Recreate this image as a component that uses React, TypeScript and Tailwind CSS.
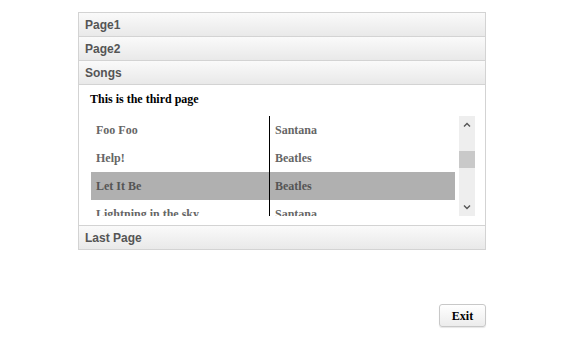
const songs = [
  { title: "Foo Foo", artist: "Santana" },
  { title: "Help!", artist: "Beatles" },
  { title: "Let It Be", artist: "Beatles", selected: true },
  { title: "Lightning in the sky", artist: "Santana" },
];

const Header = ({ label, last }: { label: string; last?: boolean }) => (
  <div
    className={`flex items-center px-[6px] bg-gradient-to-b from-[#fafafa] to-[#e9e9e9] text-[12px] font-bold text-[#555] ${
      last ? "h-[23px]" : "h-[24px] border-b border-[#d3d3d3]"
    }`}
    style={{ fontFamily: '"Liberation Sans", Arial, sans-serif' }}
  >
    {label}
  </div>
);

const Chevron = ({ up }: { up?: boolean }) => (
  <svg width="8" height="5" viewBox="0 0 8 5" className="block">
    <path
      d={up ? "M1 4.5 L4 1.5 L7 4.5" : "M1 0.5 L4 3.5 L7 0.5"}
      fill="none"
      stroke="#555"
      strokeWidth="1.4"
    />
  </svg>
);

const App = () => {
  return (
    <div className="w-[563px] h-[354px] bg-white pt-[12px] pl-[78px]">
      <div className="w-[408px] border border-[#d3d3d3]">
        <Header label="Page1" />
        <Header label="Page2" />
        <Header label="Songs" />
        <div
          className="h-[141px] border-b border-[#d3d3d3] bg-white pl-[12px] pt-[7px]"
          style={{ fontFamily: '"Liberation Serif", "Times New Roman", serif' }}
        >
          <p className="text-[12px] leading-[14px] font-bold text-black -ml-[1px]">
            This is the third page
          </p>
          <div className="mt-[10px] flex h-[100px] w-[384px]">
            <div className="w-[364px] h-[100px] overflow-hidden relative">
              <div className="absolute left-[178px] top-0 bottom-0 w-px bg-black" />
              {songs.map((s) => (
                <div
                  key={s.title}
                  className={`flex h-[28px] items-center text-[12px] font-bold ${
                    s.selected ? "bg-[#b0b0b0] text-[#555]" : "text-[#666]"
                  }`}
                >
                  <div className="w-[179px] pl-[5px] whitespace-nowrap">{s.title}</div>
                  <div className="flex-1 pl-[5px] whitespace-nowrap">{s.artist}</div>
                </div>
              ))}
            </div>
            <div className="ml-[4px] w-[16px] h-[100px] bg-[#eeeeee] flex flex-col items-center">
              <div className="h-[17px] flex items-center justify-center">
                <Chevron up />
              </div>
              <div className="mt-[18px] w-full h-[17px] bg-[#c9c9c9]" />
              <div className="flex-1" />
              <div className="h-[17px] flex items-center justify-center">
                <Chevron />
              </div>
            </div>
          </div>
        </div>
        <Header label="Last Page" last />
      </div>
      <div className="w-[408px] flex justify-end mt-[54px]">
        <button
          className="w-[47px] h-[23px] rounded-[3px] border border-[#c8c8c8] bg-gradient-to-b from-white to-[#ececec] shadow-[0_1px_1px_rgba(0,0,0,0.1)] text-[12px] font-bold text-black"
          style={{ fontFamily: '"Liberation Serif", "Times New Roman", serif' }}
        >
          Exit
        </button>
      </div>
    </div>
  );
};

export default App;
